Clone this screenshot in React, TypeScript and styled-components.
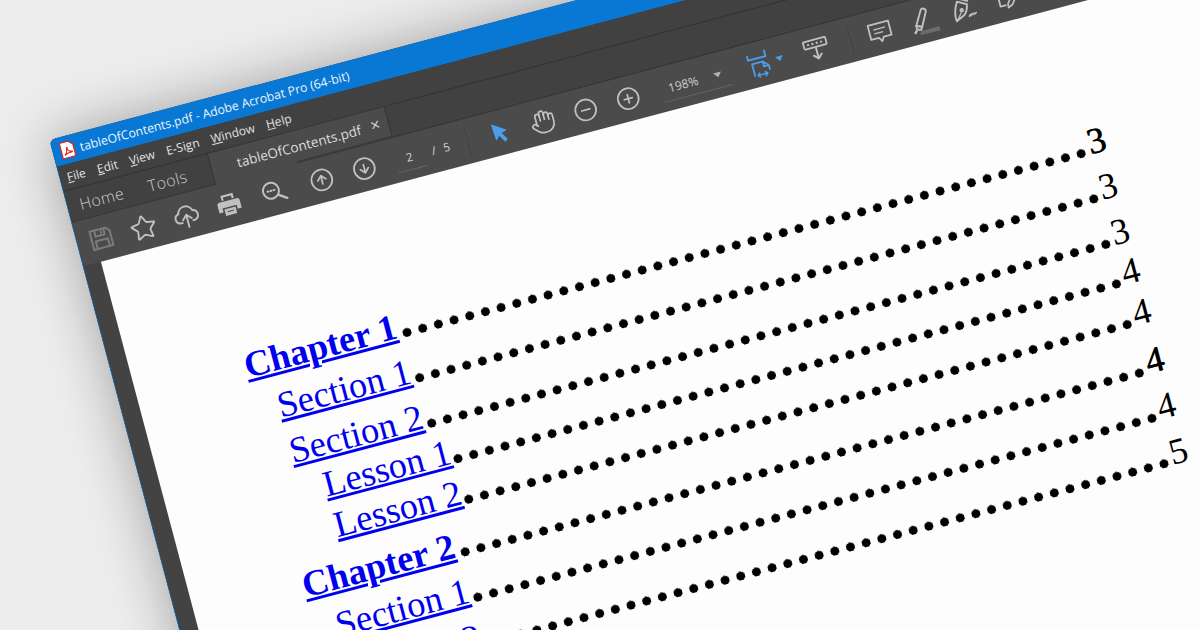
import React from "react"
import styled, { createGlobalStyle } from "styled-components"
import { Star, CircleArrowUp, CircleArrowDown, Hand, CircleMinus, CirclePlus } from "lucide-react"

const UI_FONT = `"Open Sans", "Noto Sans", sans-serif`
const ICON = "#c0c0c0"

const GlobalStyle = createGlobalStyle`
  html, body {
    margin: 0;
    height: 630px;
    overflow: hidden;
    background: #ededed;
  }
`

const menuItems = [
  { key: "F", rest: "ile" },
  { key: "E", rest: "dit" },
  { key: "V", rest: "iew" },
  { key: "", rest: "E-Sign" },
  { key: "W", rest: "indow" },
  { key: "H", rest: "elp" },
]

const tocRows = [
  { label: "Chapter 1", page: 3, indent: 112, gap: 0, bold: true },
  { label: "Section 1", page: 3, indent: 134, gap: 4.5, bold: false },
  { label: "Section 2", page: 3, indent: 134, gap: 5.5, bold: false },
  { label: "Lesson 1", page: 4, indent: 158, gap: -1, bold: false },
  { label: "Lesson 2", page: 4, indent: 158, gap: 0, bold: false },
  { label: "Chapter 2", page: 4, indent: 112, gap: 8, bold: true },
  { label: "Section 1", page: 4, indent: 134, gap: 5, bold: false },
  { label: "Section 2", page: 5, indent: 134, gap: 5, bold: false },
]

const PdfLogo = () => (
  <svg width="15" height="18" viewBox="0 0 15 18">
    <path d="M1 1h9l4 4v12H1z" fill="#fff" stroke="#d8261c" strokeWidth="1.200" strokeLinejoin="round" />
    <path d="M3.500 14c1.800-1 2.800-3.500 3.300-6.500.2-1.600 1-1 .7.400-.3 1.800 1.200 3.300 3.500 3.500 1.200.1 1 1-.2.900-2-.2-5.300.6-7.300 1.700z" fill="none" stroke="#d8261c" strokeWidth="1.100" />
  </svg>
)

const SaveIcon = () => (
  <svg width="25" height="25" viewBox="0 0 24 24" fill="none" stroke="#7c7c7c" strokeWidth="1.900" strokeLinejoin="round">
    <path d="M2.500 3h15.500l3.500 3.500V21h-19z" />
    <path d="M7 3v6h9V3M6 21v-7.500h12V21M13 4.500v3" />
  </svg>
)

const UploadIcon = () => (
  <svg width="27" height="27" viewBox="0 0 27 27" fill="none" stroke={ICON} strokeWidth="1.900" strokeLinejoin="round" strokeLinecap="round">
    <path d="M8 19.500H6.500a4.800 4.800 0 0 1-.6-9.500 7.500 7.500 0 0 1 14.600-.6 5.100 5.100 0 0 1 0 10.100H19" />
    <path d="M13.500 25V12.500M9 17l4.500-4.500L18 17" />
  </svg>
)

const PrintIcon = () => (
  <svg width="25" height="25" viewBox="0 0 24 24" fill={ICON}>
    <path d="M6 2h12v5h-2V4H8v3H6z" />
    <path d="M3.500 8h17A2.500 2.500 0 0 1 23 10.500V18h-4v-4H5v4H1v-7.500A2.500 2.500 0 0 1 3.500 8z" />
    <path d="M6.500 15.500h11V22h-11z" />
    <path d="M9 17.800h6v1H9z" fill="#4a4a4a" />
  </svg>
)

const SearchIcon = () => (
  <svg width="27" height="25" viewBox="0 0 27 25" fill="none" stroke={ICON} strokeWidth="2">
    <circle cx="10.500" cy="10" r="8" />
    <path d="M16.500 15.500l8 5.500" strokeWidth="2.400" strokeLinecap="round" />
    <path d="M7 10h.9M10.100 10h.9M13.200 10h.9" strokeLinecap="round" />
  </svg>
)

const CursorIcon = () => (
  <svg width="18" height="24" viewBox="0 0 18 24" fill="#4a9eea">
    <path d="M2 1l14 9.500-5.500 1.700 4.200 7.300-3.200 2-4.200-7.300L3.200 18.500z" />
  </svg>
)

const FitIcon = () => (
  <svg width="26" height="30" viewBox="0 0 26 30" fill="none" stroke="#4a9eea" strokeWidth="1.800">
    <path d="M2 4v4.500h18V2" />
    <path d="M5 26V13h11l5 5v5M16 13v5h5" />
    <path d="M8 25.500h10M10.500 23l-2.500 2.500 2.500 2.500M15.500 23l2.500 2.500-2.500 2.500" strokeWidth="1.500" />
  </svg>
)

const KeyboardIcon = () => (
  <svg width="26" height="26" viewBox="0 0 26 26" fill="none" stroke={ICON} strokeWidth="1.800">
    <rect x="1.500" y="3" width="23" height="7.500" rx="1" />
    <path d="M5 6.800h2M9.500 6.800h2M14 6.800h2M18.500 6.800h2" strokeWidth="2" />
    <path d="M13 11v11M8.500 18l4.500 4.500 4.500-4.500" strokeWidth="2" />
  </svg>
)

const CommentIcon = () => (
  <svg width="24" height="26" viewBox="0 0 24 26" fill="none" stroke={ICON} strokeWidth="1.800" strokeLinejoin="round">
    <path d="M1.500 3.500h21v14.500h-8l-2.500 4-2.500-4h-8z" />
    <path d="M6 9h12M6 13h9" strokeWidth="1.300" />
  </svg>
)

const HighlighterIcon = () => (
  <svg width="32" height="30" viewBox="0 0 32 30" fill="none" stroke={ICON} strokeWidth="1.900" strokeLinejoin="round">
    <path d="M7.500 18L16 3.500c1.200-1.800 5.500.3 4.500 2.800L13 20.500z" />
    <path d="M7.500 18l5.500 2.500-1.500 2.500-4-1z" />
    <path d="M4.500 25.500l2.500-3" strokeWidth="2.400" />
    <path d="M11 24.500l19-.5v4.500L9 28z" fill="#6b6b6b" stroke="none" />
  </svg>
)

const PenIcon = () => (
  <svg width="32" height="32" viewBox="0 0 32 32" fill="none" stroke={ICON} strokeWidth="1.900" strokeLinejoin="round">
    <path d="M9 6l9 5c-.8 4.500-2.800 8-5.500 10L4 25c-.5-4 0-11 5-19z" />
    <path d="M9 2l11 6" strokeWidth="2.400" />
    <path d="M5 24.500l5.500-7" strokeWidth="1.300" />
    <circle cx="11.500" cy="15.500" r="1.300" />
    <path d="M17 24c1.300-2.500 1.900-3 2.200-.6.600-2.500 1.500-2.800 1.900-.4.600-2.200 1.500-2.500 2.100-.2.600-1.300 1.500-1.600 2.500-1.200" strokeWidth="1.300" />
  </svg>
)

const SignIcon = () => (
  <svg width="26" height="26" viewBox="0 0 26 26" fill="none" stroke={ICON} strokeWidth="1.800" strokeLinejoin="round">
    <path d="M3 6v13h6" />
    <path d="M11 18l11-14 3 2.500-10 13.500-4.500 2z" />
    <path d="M19 8l3 2.500" />
  </svg>
)

export default function App() {
  return (
    <>
      <GlobalStyle />
      <Desktop>
        <AcrobatWindow>
          <TitleBar>
            <PdfLogo />
            <TitleText>tableOfContents.pdf - Adobe Acrobat Pro (64-bit)</TitleText>
          </TitleBar>

          <MenuBar>
            {menuItems.map((item) => (
              <MenuItem key={item.rest}>
                {item.key && <u>{item.key}</u>}
                {item.rest}
              </MenuItem>
            ))}
          </MenuBar>

          <TabBar>
            <NavTabs>
              <NavTab $width={70}>Home</NavTab>
              <NavTab $width={66}>Tools</NavTab>
            </NavTabs>
            <DocTab>
              <DocTabLabel>tableOfContents.pdf</DocTabLabel>
              <DocTabClose>×</DocTabClose>
            </DocTab>
            <TabFill />
          </TabBar>

          <Toolbar>
            <Slot><SaveIcon /></Slot>
            <Slot><Star size={28} color={ICON} strokeWidth={1.6} /></Slot>
            <Slot><UploadIcon /></Slot>
            <Slot><PrintIcon /></Slot>
            <Slot $before={3}><SearchIcon /></Slot>
            <Slot $before={5}><CircleArrowUp size={25} color={ICON} strokeWidth={1.7} /></Slot>
            <Slot><CircleArrowDown size={25} color={ICON} strokeWidth={1.7} /></Slot>
            <PageGroup>
              <PageInput>2</PageInput>
              <PageOf>/</PageOf>
              <PageOf>5</PageOf>
            </PageGroup>
            <ToolSeparator />
            <Slot $before={11}><CursorIcon /></Slot>
            <Slot><Hand size={26} color={ICON} strokeWidth={1.6} /></Slot>
            <Slot><CircleMinus size={25} color={ICON} strokeWidth={1.7} /></Slot>
            <Slot><CirclePlus size={25} color={ICON} strokeWidth={1.7} /></Slot>
            <ZoomField>
              <ZoomValue>198%</ZoomValue>
              <Caret $color="#b4b4b4" />
            </ZoomField>
            <Slot $before={16} $width={32}><FitIcon /></Slot>
            <Caret $color="#4a9eea" />
            <Slot $before={12}><KeyboardIcon /></Slot>
            <ToolSeparator $before={13} />
            <Slot $before={8}><CommentIcon /></Slot>
            <Slot $before={1}><HighlighterIcon /></Slot>
            <Slot><PenIcon /></Slot>
            <Slot><SignIcon /></Slot>
          </Toolbar>

          <Workspace>
            <SideRail />
            <Page>
              {tocRows.map((row, i) => (
                <TocRow key={i} $gap={row.gap} $indent={row.indent}>
                  <TocLink href="#" $bold={row.bold}>{row.label}</TocLink>
                  <Leader />
                  <PageNumber $heavy={row.bold}>{row.page}</PageNumber>
                </TocRow>
              ))}
            </Page>
          </Workspace>
        </AcrobatWindow>
      </Desktop>
    </>
  )
}

const Desktop = styled.div`
  position: relative;
  width: 1200px;
  height: 630px;
  overflow: hidden;
  background: #ededed;
`

const AcrobatWindow = styled.div`
  position: absolute;
  left: 49px;
  top: 140px;
  width: 1500px;
  height: 900px;
  display: flex;
  flex-direction: column;
  transform-origin: 0 0;
  transform: rotate(-14.85deg);
  border-radius: 6px 0 0 0;
  border-left: 1px solid #0878d4;
  background: #414141;
  box-shadow: 0 0 55px rgba(0, 0, 0, 0.32);
  font-family: ${UI_FONT};
`

const TitleBar = styled.div`
  height: 28px;
  flex: none;
  display: flex;
  align-items: center;
  gap: 5px;
  padding-left: 7px;
  background: #0878d4;
  border-radius: 6px 0 0 0;
`

const TitleText = styled.span`
  font-size: 12.300px;
  color: #eaf3fb;
  white-space: nowrap;
`

const MenuBar = styled.div`
  height: 25px;
  flex: none;
  display: flex;
  align-items: center;
  gap: 12px;
  padding-left: 7px;
  background: #414141;
`

const MenuItem = styled.span`
  font-size: 12px;
  color: #e2e2e2;
`

const TabBar = styled.div`
  height: 33px;
  flex: none;
  display: flex;
`

const NavTabs = styled.div`
  width: 148px;
  display: flex;
  align-items: center;
  background: #414141;
  border: solid #333;
  border-width: 1px 0;
  box-sizing: border-box;
`

const NavTab = styled.span<{ $width: number }>`
  width: ${(p) => p.$width}px;
  text-align: center;
  font-size: 16px;
  font-weight: 300;
  letter-spacing: 0.4px;
  color: #c9c9c9;
`

const DocTab = styled.div`
  position: relative;
  width: 184px;
  display: flex;
  align-items: center;
  padding-left: 26px;
  box-sizing: border-box;
  background: #4b4b4b;
  border: solid #333;
  border-width: 1px 1px 0 1px;

  &::after {
    content: "";
    position: absolute;
    left: 84px;
    right: 0;
    bottom: 0;
    height: 2px;
    background: #3a3a3a;
  }
`

const DocTabLabel = styled.span`
  font-size: 13.500px;
  color: #dcdcdc;
  white-space: nowrap;
`

const DocTabClose = styled.span`
  position: absolute;
  right: 8px;
  top: 3px;
  font-size: 17px;
  color: #cfcfcf;
`

const TabFill = styled.div`
  flex: 1;
  border: solid #333;
  border-width: 1px 0;
`

const Toolbar = styled.div`
  height: 45px;
  flex: none;
  display: flex;
  align-items: center;
  padding-left: 2px;
  background: #4b4b4b;
`

const Slot = styled.div<{ $before?: number; $width?: number }>`
  width: ${(p) => p.$width ?? 44}px;
  margin-left: ${(p) => p.$before ?? 0}px;
  flex: none;
  display: flex;
  align-items: center;
  justify-content: center;
`

const PageGroup = styled.div`
  width: 85px;
  flex: none;
  display: flex;
  align-items: center;
  gap: 8px;
  padding-left: 10px;
  box-sizing: border-box;
`

const PageInput = styled.span`
  width: 30px;
  height: 26px;
  line-height: 27px;
  text-align: center;
  font-size: 11.500px;
  color: #d8d8d8;
  border-bottom: 1px solid #666;
`

const PageOf = styled.span`
  font-size: 11.500px;
  color: #d8d8d8;
`

const ToolSeparator = styled.div<{ $before?: number }>`
  width: 1px;
  height: 30px;
  flex: none;
  margin-left: ${(p) => p.$before ?? 0}px;
  background: #424242;
`

const ZoomField = styled.div`
  position: relative;
  width: 70px;
  height: 26px;
  flex: none;
  margin-left: 13px;
  display: flex;
  align-items: center;
  padding-left: 7px;
  box-sizing: border-box;
  border-bottom: 1px solid #666;

  & > i {
    position: absolute;
    right: 8px;
    top: 10px;
  }
`

const ZoomValue = styled.span`
  font-size: 12px;
  color: #cfcfcf;
`

const Caret = styled.i<{ $color: string }>`
  width: 0;
  height: 0;
  flex: none;
  border-left: 4px solid transparent;
  border-right: 4px solid transparent;
  border-top: 5px solid ${(p) => p.$color};
`

const Workspace = styled.div`
  flex: 1;
  display: flex;
`

const SideRail = styled.div`
  width: 18px;
  flex: none;
  background: #434343;
`

const Page = styled.div`
  flex: 1;
  padding-top: 117px;
  background: #fdfdfd;
  font-family: "Liberation Serif", "Times New Roman", serif;
  font-size: 36.500px;
  line-height: 42px;
`

const TocRow = styled.div<{ $gap: number; $indent: number }>`
  width: 1002px;
  height: 42px;
  display: flex;
  margin-top: ${(p) => p.$gap}px;
  padding-left: ${(p) => p.$indent}px;
  box-sizing: border-box;
`

const TocLink = styled.a<{ $bold: boolean }>`
  flex: none;
  color: #0000ee;
  font-weight: ${(p) => (p.$bold ? 700 : 400)};
  text-decoration: underline;
`

const Leader = styled.span`
  flex: 1;
  background-image: radial-gradient(circle 4.700px at 50% 29.800px, #000 4.200px, transparent 4.700px);
  background-size: 16.220px 42px;
  background-position: right top;
  background-repeat: repeat-x;
`

const PageNumber = styled.span<{ $heavy: boolean }>`
  flex: none;
  color: #000;
  text-shadow: ${(p) => (p.$heavy ? "0.7px 0 0 #000" : "none")};
`
